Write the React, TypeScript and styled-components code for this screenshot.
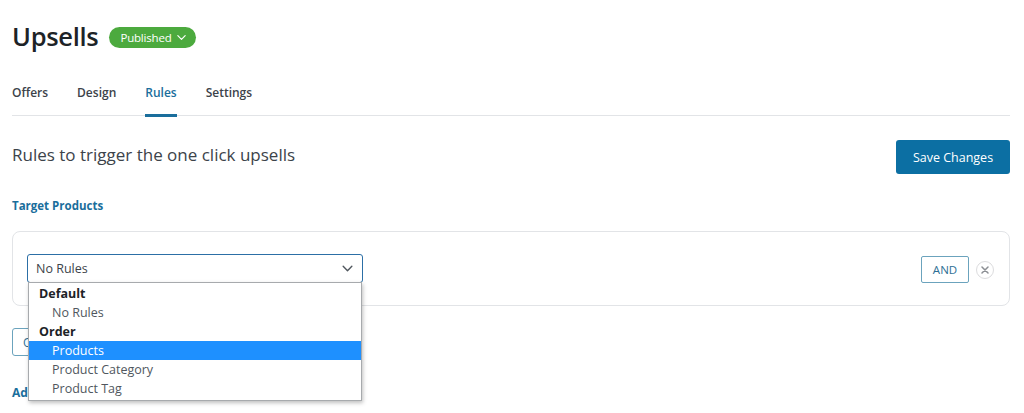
import React from 'react';
import styled, { createGlobalStyle } from 'styled-components';

const GlobalStyle = createGlobalStyle`
  body {
    margin: 0;
    background: #ffffff;
    font-family: 'Open Sans', 'Noto Sans', sans-serif;
    color: #3c434a;
  }
`;

const tabs = ['Offers', 'Design', 'Rules', 'Settings'];

const groups = [
  { label: 'Default', options: ['No Rules'] },
  { label: 'Order', options: ['Products', 'Product Category', 'Product Tag'] },
];

const Chevron: React.FC<{ size?: number; color?: string }> = ({ size = 12, color = '#fff' }) => (
  <svg width={size} height={size} viewBox="0 0 12 12" fill="none">
    <path d="M2 4l4 4 4-4" stroke={color} strokeWidth="1.3" strokeLinecap="round" strokeLinejoin="round" />
  </svg>
);

const App: React.FC = () => {
  return (
    <Page>
      <GlobalStyle />
      <TitleRow>
        <Title>Upsells</Title>
        <StatusBadge>
          Published
          <Chevron size={11} />
        </StatusBadge>
      </TitleRow>

      <TabBar>
        {tabs.map((t) => (
          <Tab key={t} $active={t === 'Rules'}>
            {t}
          </Tab>
        ))}
      </TabBar>

      <SectionHeader>
        <SectionTitle>Rules to trigger the one click upsells</SectionTitle>
        <PrimaryButton>Save Changes</PrimaryButton>
      </SectionHeader>

      <Label>Target Products</Label>

      <RuleCard>
        <SelectWrap>
          <Select>
            <span>No Rules</span>
            <Chevron size={13} color="#50575e" />
          </Select>
          <Dropdown>
            {groups.map((g) => (
              <React.Fragment key={g.label}>
                <GroupLabel>{g.label}</GroupLabel>
                {g.options.map((o) => (
                  <Option key={o} $selected={o === 'Products'}>
                    {o}
                  </Option>
                ))}
              </React.Fragment>
            ))}
          </Dropdown>
        </SelectWrap>
        <RowActions>
          <AndButton>AND</AndButton>
          <RemoveButton>
            <svg width="8" height="8" viewBox="0 0 8 8">
              <path d="M1 1l6 6M7 1L1 7" stroke="#8c8f94" strokeWidth="1.5" strokeLinecap="round" />
            </svg>
          </RemoveButton>
        </RowActions>
      </RuleCard>

      <OutlineButton>OR</OutlineButton>

      <LinkText>Add Exclusions</LinkText>
    </Page>
  );
};

export default App;

const Page = styled.div`
  padding: 18px 14px 0 12px;
  width: 1024px;
  height: 413px;
  box-sizing: border-box;
  overflow: hidden;
`;

const TitleRow = styled.div`
  display: flex;
  align-items: center;
  gap: 11px;
`;

const Title = styled.h1`
  margin: 0;
  font-size: 25.5px;
  font-weight: 600;
  letter-spacing: -0.3px;
  color: #1d2327;
  line-height: 36px;
`;

const StatusBadge = styled.span`
  display: inline-flex;
  align-items: center;
  gap: 4px;
  height: 21px;
  padding: 0 9px 0 11px;
  border-radius: 11px;
  background: #4caa3e;
  color: #fff;
  font-size: 11.5px;
  font-weight: 500;
  letter-spacing: -0.2px;
  margin-top: 2px;
`;

const TabBar = styled.nav`
  display: flex;
  gap: 29px;
  margin-top: 30px;
  border-bottom: 1px solid #e2e4e7;
`;

const Tab = styled.div<{ $active?: boolean }>`
  font-size: 12px;
  font-weight: 600;
  line-height: 18px;
  padding-bottom: 12px;
  color: ${({ $active }) => ($active ? '#1a6e9c' : '#3c434a')};
  border-bottom: 3px solid ${({ $active }) => ($active ? '#1a6e9c' : 'transparent')};
  margin-bottom: -2px;
`;

const SectionHeader = styled.div`
  display: flex;
  justify-content: space-between;
  align-items: flex-start;
  margin-top: 24px;
`;

const SectionTitle = styled.h2`
  margin: 3px 0 0;
  font-size: 17px;
  line-height: 24px;
  font-weight: 500;
  color: #3c434a;
`;

const PrimaryButton = styled.button`
  width: 114px;
  height: 34px;
  border: none;
  border-radius: 3px;
  background: #0c6fa3;
  color: #fff;
  font-family: inherit;
  font-size: 12.5px;
  font-weight: 500;
`;

const Label = styled.div`
  margin-top: 24px;
  font-size: 11.5px;
  font-weight: 700;
  color: #1a6e9c;
`;

const RuleCard = styled.div`
  margin-top: 18px;
  height: 75px;
  box-sizing: border-box;
  border: 1px solid #e2e4e7;
  border-radius: 8px;
  padding: 22px 15px 0 14px;
  display: flex;
  justify-content: space-between;
  align-items: flex-start;
`;

const SelectWrap = styled.div`
  position: relative;
  width: 336px;
`;

const Select = styled.div`
  height: 29px;
  box-sizing: border-box;
  border: 1px solid #2c6fa6;
  border-radius: 3px;
  padding: 0 8px 0 8px;
  display: flex;
  align-items: center;
  justify-content: space-between;
  font-size: 12.5px;
  color: #3c434a;
`;

const Dropdown = styled.div`
  position: absolute;
  top: 28px;
  left: 1px;
  width: 334px;
  box-sizing: border-box;
  background: #fff;
  border: 1px solid #a7aaad;
  box-shadow: 1px 2px 4px rgba(0, 0, 0, 0.25);
  padding: 1px 0 2px;
  z-index: 2;
`;

const GroupLabel = styled.div`
  font-size: 12.5px;
  font-weight: 700;
  color: #1d2327;
  line-height: 19px;
  padding-left: 10px;
`;

const Option = styled.div<{ $selected?: boolean }>`
  font-size: 12.5px;
  line-height: 19px;
  padding-left: 23px;
  color: ${({ $selected }) => ($selected ? '#fff' : '#50575e')};
  background: ${({ $selected }) => ($selected ? '#1e90ff' : 'transparent')};
`;

const RowActions = styled.div`
  display: flex;
  align-items: center;
  gap: 7px;
  margin-top: 2px;
`;

const AndButton = styled.div`
  width: 48px;
  height: 27px;
  box-sizing: border-box;
  border: 1px solid #6ba3bd;
  border-radius: 2px;
  display: flex;
  align-items: center;
  justify-content: center;
  font-size: 11.5px;
  color: #2e6f95;
`;

const RemoveButton = styled.div`
  width: 18px;
  height: 18px;
  box-sizing: border-box;
  border: 1px solid #dcdcde;
  border-radius: 50%;
  display: flex;
  align-items: center;
  justify-content: center;
`;

const OutlineButton = styled.div`
  margin-top: 22px;
  width: 60px;
  height: 28px;
  box-sizing: border-box;
  border: 1px solid #6ba3bd;
  border-radius: 3px;
  display: flex;
  align-items: center;
  padding-left: 10px;
  font-size: 12px;
  color: #2e6f95;
`;

const LinkText = styled.div`
  margin-top: 28px;
  font-size: 12px;
  font-weight: 700;
  color: #1a6e9c;
`;
